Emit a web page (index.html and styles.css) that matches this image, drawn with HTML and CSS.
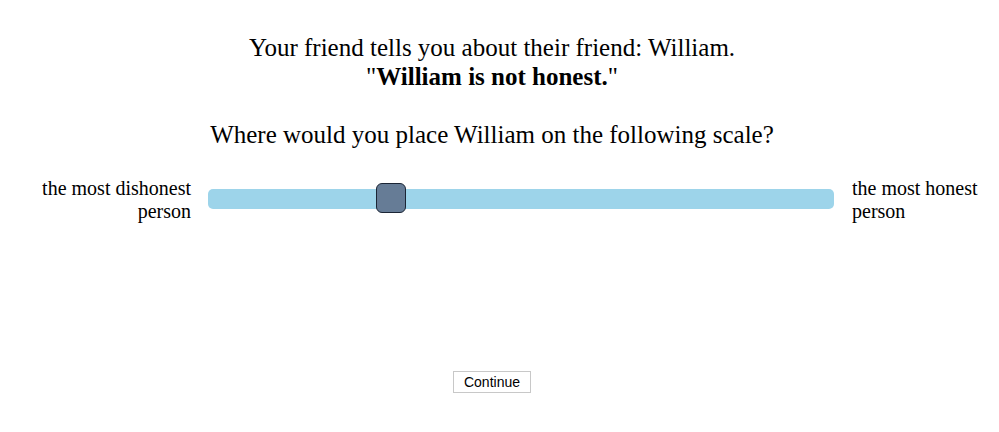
FILE: index.html
```html
<!DOCTYPE html>
<html>
<head>
<meta charset="utf-8">
<link rel="stylesheet" href="styles.css">
</head>
<body>
<div class="stimulus">
  <p class="statement">Your friend tells you about their friend: William.<br>"<b>William is not honest.</b>"</p>
  <p class="question">Where would you place William on the following scale?</p>
</div>
<div class="scale">
  <div class="label left">the most dishonest<br>person</div>
  <div class="track"><div class="thumb"></div></div>
  <div class="label right">the most honest<br>person</div>
</div>
<div class="actions">
  <button class="continue">Continue</button>
</div>
</body>
</html>
```
FILE: styles.css
```css
html, body { margin: 0; padding: 0; background: #fff; }
body {
  font-family: "Liberation Serif", "Times New Roman", serif;
  color: #000;
  width: 999px;
}
.stimulus { text-align: center; padding-top: 33px; padding-right: 15px; }
.stimulus p { margin: 0; font-size: 25px; line-height: 29px; }
.statement { margin-bottom: 29px !important; }
.scale {
  display: grid;
  grid-template-columns: 191px 626px 1fr;
  column-gap: 17px;
  margin-top: 28px;
}
.label { font-size: 20px; line-height: 23px; }
.label.left { text-align: right; }
.label.right { padding-left: 1px; }
.track {
  position: relative;
  height: 20px;
  margin-top: 12px;
  background: #9dd4ea;
  border-radius: 5px;
}
.thumb {
  position: absolute;
  left: 168px;
  top: -6px;
  width: 28px;
  height: 28px;
  background: #667c96;
  border: 1px solid #1b2535;
  border-radius: 6px;
}
.actions { text-align: center; margin-top: 148px; padding-right: 15px; }
.continue {
  font-family: "Liberation Sans", Arial, sans-serif;
  font-size: 14px;
  background: #fff;
  border: 1px solid #c8c8c8;
  padding: 0 9px;
  width: 78px;
  height: 22px;
  color: #000;
}
```
